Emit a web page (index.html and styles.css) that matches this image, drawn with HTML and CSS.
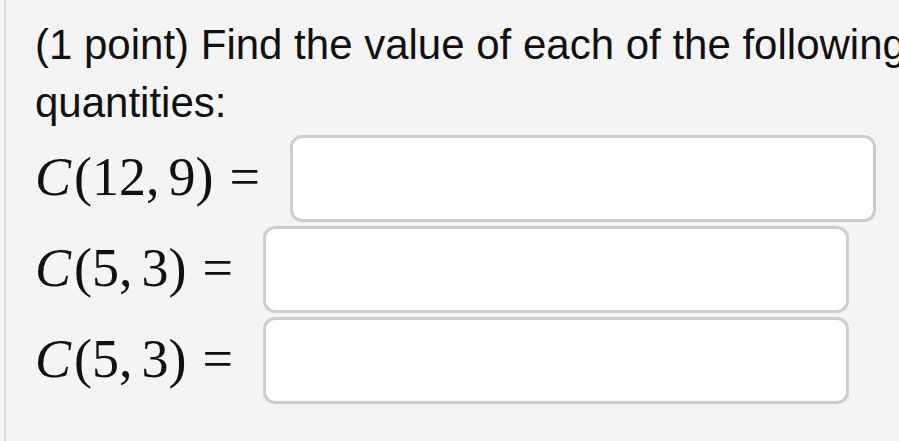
FILE: index.html
```html
<!DOCTYPE html>
<html lang="en">
<head>
<meta charset="utf-8">
<title>Problem</title>
<link rel="stylesheet" href="styles.css">
</head>
<body>
<div class="problem">
  <p class="prompt">(1 point) Find the value of each of the following quantities:</p>
  <div class="row">
    <span class="math"><i class="var">C</i>(12,<span class="thin"></span>9)<span class="rel">=</span></span>
    <input class="answer" type="text" aria-label="C(12,9)">
  </div>
  <div class="row">
    <span class="math"><i class="var">C</i>(5,<span class="thin"></span>3)<span class="rel">=</span></span>
    <input class="answer" type="text" aria-label="C(5,3)">
  </div>
  <div class="row">
    <span class="math"><i class="var">C</i>(5,<span class="thin"></span>3)<span class="rel">=</span></span>
    <input class="answer" type="text" aria-label="C(5,3)">
  </div>
</div>
</body>
</html>
```

FILE: styles.css
```css
html, body {
  margin: 0;
  padding: 0;
  background: #f4f4f4;
  overflow: hidden;
}

body {
  width: 899px;
  height: 441px;
}

.problem {
  margin-left: 4px;
  border-left: 2px solid #dcdcdc;
  padding: 16px 0 0 29px;
  width: 880px;
  height: 425px;
  color: #111;
}

.prompt {
  margin: 0;
  font-family: "Liberation Sans", Arial, Helvetica, sans-serif;
  font-size: 42px;
  line-height: 58px;
  width: 890px;
}

.row {
  display: flex;
  align-items: center;
  gap: 30px;
  margin-top: 4px;
}

.row:first-of-type {
  margin-top: 3px;
}

.math {
  font-family: "Liberation Serif", "Times New Roman", serif;
  font-size: 54px;
  white-space: nowrap;
  color: #111;
  margin-top: -4px;
}

.var {
  font-style: italic;
  margin-right: 3px;
}

.thin {
  display: inline-block;
  width: 9px;
}

.rel {
  margin-left: 16px;
}

.answer {
  width: 586px;
  height: 87px;
  box-sizing: border-box;
  border: 3px solid #cdcdcd;
  border-radius: 12px;
  background: #fff;
  outline: none;
  flex: none;
}
```
